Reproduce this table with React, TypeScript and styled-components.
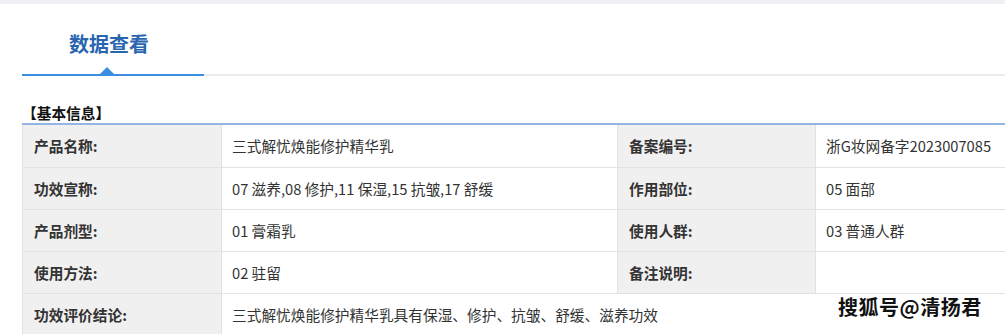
import React from "react";
import styled, { createGlobalStyle } from "styled-components";

const Global = createGlobalStyle`
  html, body { margin: 0; padding: 0; background: #eef0f3; overflow: hidden; }
  body { font-family: "Microsoft YaHei", "Noto Sans CJK SC", "Noto Sans", sans-serif; }
`;

const Card = styled.div`
  margin-top: 4px;
  background: #fff;
  padding-left: 22px;
  height: 330px;
  position: relative;
  overflow: hidden;
`;

const TabBar = styled.div`
  display: flex;
  border-bottom: 2px solid #ececec;
  width: 1100px;
`;

const Tab = styled.div`
  position: relative;
  width: 174px;
  padding: 26px 8px 16px 0;
  text-align: center;
  font-size: 20px;
  line-height: 28px;
  font-weight: bold;
  color: #2a66b0;
  border-bottom: 2px solid #3a8ee2;
  margin-bottom: -2px;
  &::after {
    content: "";
    position: absolute;
    left: 78px;
    bottom: 0;
    border-left: 7px solid transparent;
    border-right: 7px solid transparent;
    border-bottom: 7px solid #3a8ee2;
  }
`;

const SectionTitle = styled.div`
  margin-top: 27px;
  font-size: 14.7px;
  line-height: 20px;
  font-weight: bold;
  color: #111;
  border-bottom: 2px solid #92b5e6;
  width: 1100px;
`;

const Table = styled.table`
  border-collapse: collapse;
  table-layout: fixed;
  width: 1100px;
`;

const Row = styled.tr`
  height: 42px;
`;

const Cell = styled.td<{ $label?: boolean }>`
  border: 1px solid #e2e2e2;
  border-top: none;
  background: ${(p) => (p.$label ? "#f0f0f0" : "#fff")};
  font-weight: ${(p) => (p.$label ? "bold" : "normal")};
  color: #333;
  font-size: 14.7px;
  padding: 0 0 0 ${(p) => (p.$label ? 11 : 10)}px;
  vertical-align: middle;
  white-space: nowrap;
`;

const Watermark = styled.div`
  position: absolute;
  left: 838px;
  top: 288px;
  font-size: 20px;
  font-weight: bold;
  color: #111;
  letter-spacing: 0.5px;
  text-shadow: 1px 0 #fff, -1px 0 #fff, 0 1px #fff, 0 -1px #fff;
`;

const rows: [string, string, string, string][] = [
  ["产品名称:", "三式解忧焕能修护精华乳", "备案编号:", "浙G妆网备字2023007085"],
  ["功效宣称:", "07 滋养,08 修护,11 保湿,15 抗皱,17 舒缓", "作用部位:", "05 面部"],
  ["产品剂型:", "01 膏霜乳", "使用人群:", "03 普通人群"],
  ["使用方法:", "02 驻留", "备注说明:", ""],
];

export default function App() {
  return (
    <>
      <Global />
      <Card>
        <TabBar>
          <Tab>数据查看</Tab>
        </TabBar>
        <SectionTitle>【基本信息】</SectionTitle>
        <Table>
          <colgroup>
            <col style={{ width: 199 }} />
            <col style={{ width: 396 }} />
            <col style={{ width: 198 }} />
            <col />
          </colgroup>
          <tbody>
            {rows.map((r) => (
              <Row key={r[0]}>
                <Cell $label>{r[0]}</Cell>
                <Cell>{r[1]}</Cell>
                <Cell $label>{r[2]}</Cell>
                <Cell>{r[3]}</Cell>
              </Row>
            ))}
            <Row>
              <Cell $label>功效评价结论:</Cell>
              <Cell colSpan={3}>三式解忧焕能修护精华乳具有保湿、修护、抗皱、舒缓、滋养功效</Cell>
            </Row>
          </tbody>
        </Table>
        <Watermark>搜狐号@清扬君</Watermark>
      </Card>
    </>
  );
}
